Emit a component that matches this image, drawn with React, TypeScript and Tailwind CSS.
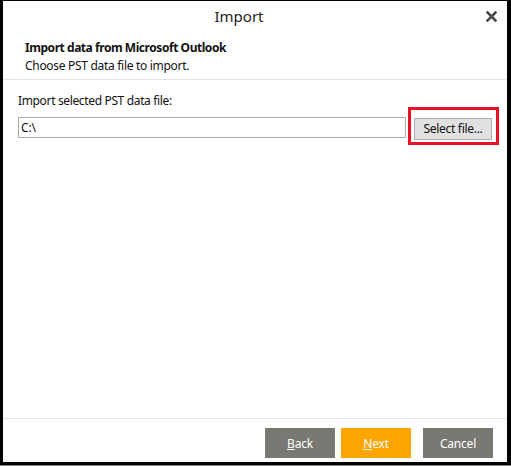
import React from "react";

export default function App() {
  const font = { fontFamily: '"Noto Sans", "Open Sans", sans-serif' };
  return (
    <div className="w-[511px] h-[466px] bg-[#8a8a8a] pb-px" style={font}>
      <div className="h-full bg-black pt-px pl-[3px] pr-[4px] pb-[3px]">
        <div className="h-full bg-white flex flex-col text-[#111]">
          <div className="relative h-[31px] flex items-center justify-center">
            <span className="text-[15px] text-[#222] leading-none ml-[-32px]">Import</span>
            <svg className="absolute right-[10px] top-[10px]" width="11" height="11" viewBox="0 0 11 11">
              <path d="M1.5 1.5 L9.5 9.5 M9.5 1.5 L1.5 9.5" stroke="#4a4a4a" strokeWidth="2.6" strokeLinecap="square" />
            </svg>
          </div>
          <div className="pl-[22px] pt-[7px] pb-[4px] border-b border-[#e6e6e6]">
            <div className="text-[12px] leading-[18px] font-bold tracking-[-0.45px]">Import data from Microsoft Outlook</div>
            <div className="text-[12px] leading-[18px] tracking-[-0.3px]">Choose PST data file to import.</div>
          </div>
          <div className="flex-1 px-[15px] pt-[13px]">
            <div className="text-[12px] leading-[16px] tracking-[-0.35px]">Import selected PST data file:</div>
            <div className="flex items-center mt-[6px] gap-[8px]">
              <div className="flex-1 h-[21px] border border-[#ababab] flex items-center px-[2px] text-[12px] tracking-[-0.2px]">C:\</div>
              <div className="relative">
                <button className="w-[78px] h-[22px] bg-[#e1e1e1] border border-[#adadad] text-[12px] leading-none tracking-[-0.3px] text-[#111]">Select file...</button>
                <div className="absolute left-[-6px] right-[-7px] top-[-8px] bottom-[-5px] border-[3px] border-[#e81224] pointer-events-none" />
              </div>
            </div>
          </div>
          <div className="h-[44px] border-t border-[#e6e6e6] flex justify-end items-start pt-[9px] pr-[14px]">
            <button className="w-[70px] h-[30px] pt-[2px] bg-[#7a7873] text-white text-[12px] tracking-[-0.2px]"><span className="underline">B</span>ack</button>
            <button className="w-[70px] h-[30px] pt-[2px] ml-[6px] bg-[#ffa500] text-white text-[12px] tracking-[-0.2px]"><span className="underline">N</span>ext</button>
            <button className="w-[70px] h-[30px] pt-[2px] ml-[12px] bg-[#7a7873] text-white text-[12px] tracking-[-0.2px]">Cancel</button>
          </div>
        </div>
      </div>
    </div>
  );
}
